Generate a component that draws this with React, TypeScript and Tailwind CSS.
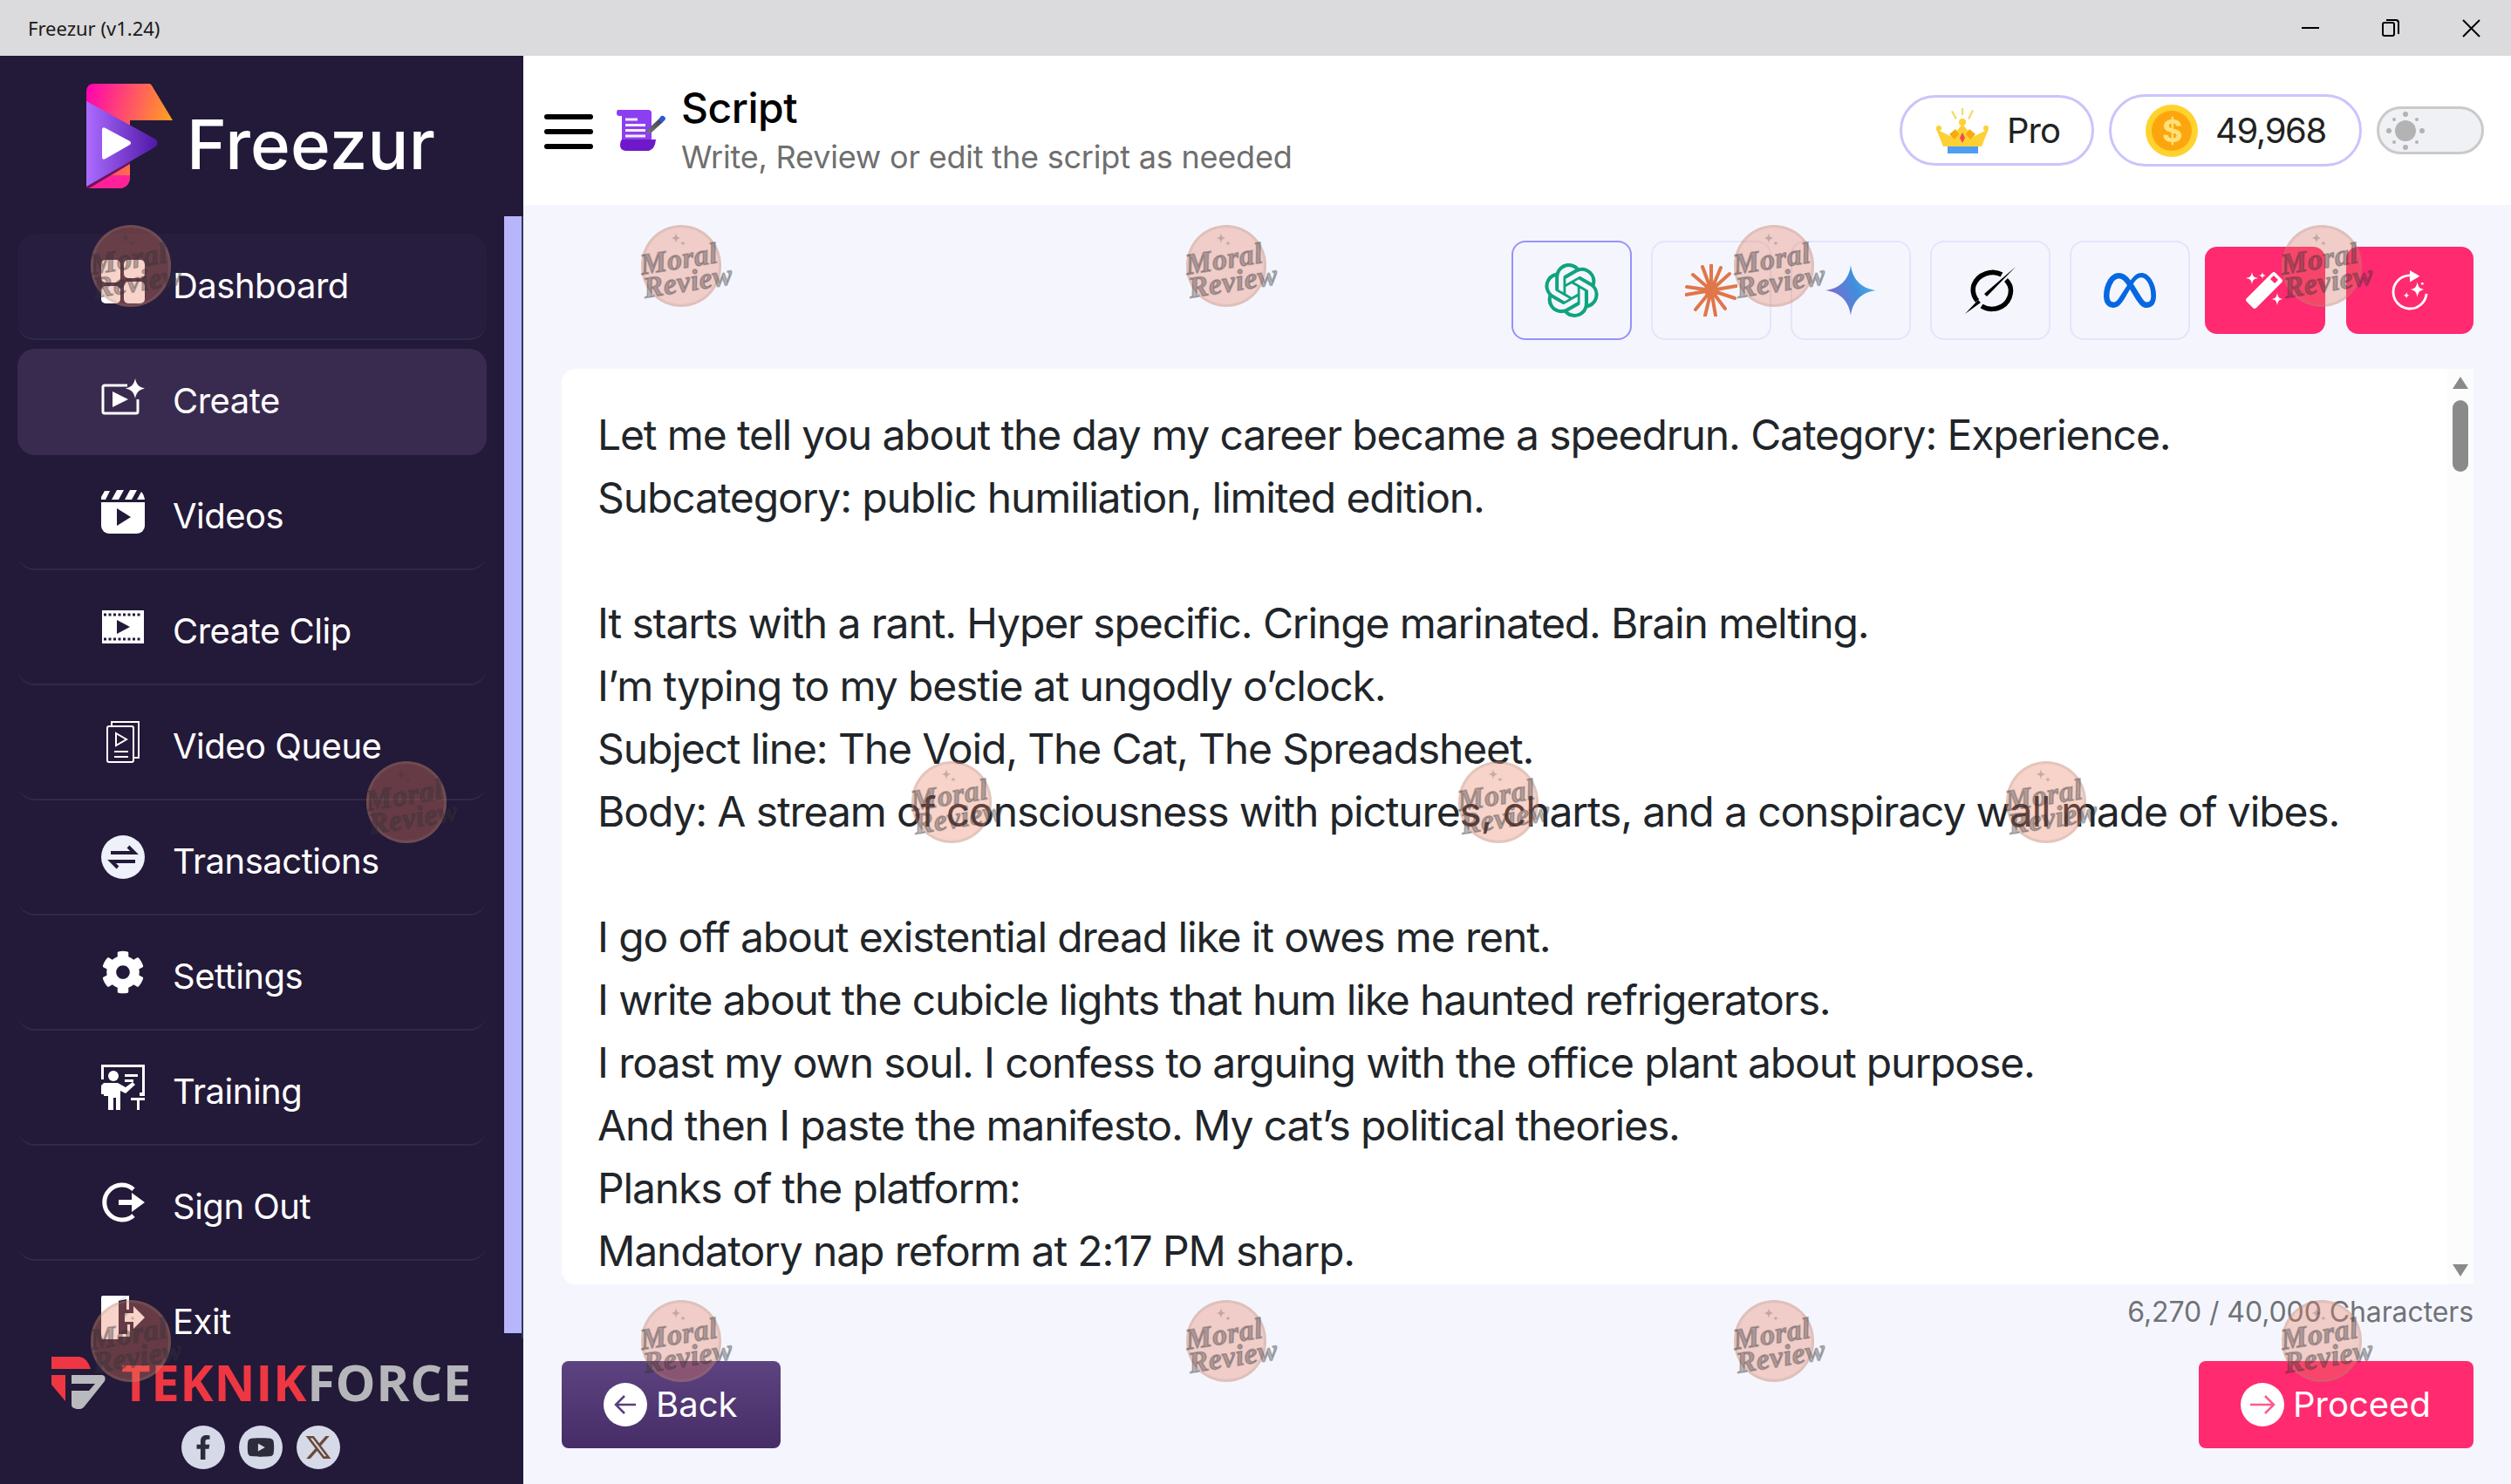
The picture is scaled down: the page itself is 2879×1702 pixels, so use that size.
import { FaCog, FaFacebookF, FaYoutube } from "react-icons/fa";
import { FaXTwitter } from "react-icons/fa6";
import { SiMeta, SiOpenai } from "react-icons/si";

const DashboardIcon = () => (
  <svg viewBox="0 0 50 50" className="w-[50px] h-[50px]" fill="#fff">
    <rect x="0" y="0" width="22" height="26" rx="5" />
    <rect x="26" y="0" width="24" height="21" rx="5" />
    <rect x="0" y="30" width="22" height="20" rx="5" />
    <rect x="26" y="25" width="24" height="25" rx="5" />
  </svg>
);

const CreateIcon = () => (
  <svg viewBox="0 0 50 42" className="w-[50px] h-[42px]" fill="none">
    <path d="M30 8H4a2 2 0 0 0-2 2v28a2 2 0 0 0 2 2h36a2 2 0 0 0 2-2V24" stroke="#fff" strokeWidth="3" />
    <path d="M13 15l18 9-18 9z" fill="#fff" />
    <path d="M39 0c1.500 7 4 10 11 11.500-7 1.500-9.500 4.500-11 11.500-1.500-7-4-10-11-11.500 7-1.500 9.500-4.500 11-11.500z" fill="#fff" />
  </svg>
);

const VideosIcon = () => (
  <svg viewBox="0 0 50 50" className="w-[50px] h-[50px]">
    <path d="M0 14h50v27a9 9 0 0 1-9 9H9a9 9 0 0 1-9-9z" fill="#fff" />
    <path d="M0 11V8l4-7h6L5 11zM12 11l6-11h8l-6 11zM27 11l6-11h8l-6 11zM41 11l5-9q3 3 4 9z" fill="#fff" />
    <path d="M18 21l16 10-16 10z" fill="#231938" />
  </svg>
);

const ClipIcon = () => (
  <svg viewBox="0 0 48 38" className="w-[48px] h-[38px]">
    <rect width="48" height="38" fill="#fff" />
    <path d="M2 5h44M2 33h44" stroke="#231938" strokeWidth="3" strokeDasharray="3 2.500" />
    <path d="M17 11l15 8-15 8z" fill="#231938" />
  </svg>
);

const QueueIcon = () => (
  <svg viewBox="0 0 38 48" className="w-[38px] h-[48px]" fill="none" stroke="#fff" strokeWidth="2">
    <rect x="1" y="6" width="30" height="41" rx="2" />
    <path d="M6 6V1h31v41h-6" />
    <path d="M11 14l12 7-12 7z" />
    <path d="M9 35h16M9 41h16" />
  </svg>
);

const TransactionsIcon = () => (
  <svg viewBox="0 0 50 50" className="w-[50px] h-[50px]">
    <circle cx="25" cy="25" r="25" fill="#eef0fa" />
    <path d="M11 20h27l-7-7M39 30H12l7 7" fill="none" stroke="#231938" strokeWidth="4" />
  </svg>
);

const TrainingIcon = () => (
  <svg viewBox="0 0 50 52" className="w-[50px] h-[52px]" fill="#fff">
    <path d="M0 0h50v36H44v-4h3V3H3v14H0z" />
    <circle cx="14" cy="13" r="6" />
    <path d="M3 21h16l9 5 8-6 3 3-11 10-6-3v22h-5V38h-3v14H8V36H3v-2H0V24z" />
    <path d="M27 11h15v3H27zM27 17h10v3H27z" />
    <path d="M34 38h16v3h-6v11h-3V41h-7z" />
  </svg>
);

const SignOutIcon = () => (
  <svg viewBox="0 0 50 46" className="w-[50px] h-[46px]" fill="none">
    <path d="M37 8A20 20 0 1 0 37 38" stroke="#fff" strokeWidth="5" />
    <path d="M20 20h15v-8l15 11-15 11v-8H20z" fill="#fff" />
  </svg>
);

const ExitIcon = () => (
  <svg viewBox="0 0 50 50" className="w-[50px] h-[50px]">
    <path d="M0 2q0-2 2-2h28l-10 6v44H2q-2 0-2-2z" fill="#fff" />
    <path d="M20 6L30 0h2v16h-3V4zM30 33h3v14H20v-3h10z" fill="#fff" />
    <path d="M27 20h10v-8l13 13-13 13v-8H27z" fill="#fff" />
  </svg>
);

const LogoMark = () => (
  <svg viewBox="0 0 99 120" className="w-[99px] h-[120px] shrink-0">
    <defs>
      <linearGradient id="logoTop" x1="0" y1="0" x2="1" y2="0.3">
        <stop offset="0" stopColor="#ff00b4" />
        <stop offset="1" stopColor="#ffa11f" />
      </linearGradient>
      <linearGradient id="logoTri" x1="0" y1="0" x2="1" y2="0">
        <stop offset="0" stopColor="#ab6cff" />
        <stop offset="1" stopColor="#4f17a6" />
      </linearGradient>
    </defs>
    <path d="M9 0H72q2 0 3 2L99 42H50V106q0 14-14 14H0V9q0-9 9-9z" fill="url(#logoTop)" />
    <path d="M20 105H50v1q0 14-14 14H0z" fill="#ff2199" />
    <path d="M0 117L50 84V92L3 120H0z" fill="#6b1457" />
    <path d="M0 20L80 64q3 4 0 8L0 118z" fill="url(#logoTri)" />
    <path d="M18 53q0-4 4-2L50 66q2 2 0 4L22 86q-4 2-4-2z" fill="#fff" />
  </svg>
);

const TeknikMark = () => (
  <svg viewBox="10 11 62 60" className="w-[62px] h-[60px] shrink-0">
    <path d="M10 11H42q9 1 13 14H10z" fill="#ee3742" />
    <path d="M10 32H26V62L10 43z" fill="#ee3742" />
    <path d="M33 32H68q5 1 3 7L47 69q-5 4-11 1-3-1-3-4V50H53L60 42H33z" fill="#b9babd" />
  </svg>
);

const ScriptIcon = () => (
  <svg viewBox="10 12 60 50" className="w-[60px] h-[50px]">
    <defs>
      <linearGradient id="pen" x1="0" y1="1" x2="1" y2="0">
        <stop offset="0" stopColor="#77777f" />
        <stop offset="1" stopColor="#3c3c48" />
      </linearGradient>
    </defs>
    <path d="M14 13H49q4 0 4 4V48H19V20H16q-3 0-3-3t1-4z" fill="#8c3ff0" />
    <path d="M19 47H58q-1 11-8 13H23q-6-1-6-6t2-7z" fill="#6f18ca" />
    <path d="M23 22.500h14v3H23zM23 29h23v3H23zM23 35h23v3H23zM23 41.500h23v3H23z" fill="#f2eefa" />
    <path d="M49 35L62 23l4 4L53 39l-5 2z" fill="url(#pen)" />
    <path d="M61 24l3-4q2-1 4 1t0 4l-3 3z" fill="#2b58d8" />
  </svg>
);

const CrownIcon = () => (
  <svg viewBox="0 0 60 52" className="w-[60px] h-[52px]">
    <path d="M29 0h2v8h-2zM17 4l2-1 5 9-2 1zM43 3l-5 10-2-1 5-10z" fill="#f4d964" />
    <path d="M8 44L0 24 18 33 30 18 42 33 60 24 52 44z" fill="#fdd133" />
    <path d="M15 30l7-6 4 6-5 6zM45 30l-7-6-4 6 5 6z" fill="#f7a90d" />
    <circle cx="30" cy="16" r="4" fill="#fdd133" />
    <circle cx="3" cy="23" r="3" fill="#fdd133" />
    <circle cx="57" cy="23" r="3" fill="#fdd133" />
    <path d="M30 28l3 6-3 6-3-6z" fill="#f3455a" />
    <rect x="13" y="44" width="35" height="8" fill="#4d9df5" />
  </svg>
);

const CoinIcon = () => (
  <div className="w-[60px] h-[60px] rounded-full bg-[#ffd22e] flex items-center justify-center shrink-0">
    <div className="w-[46px] h-[46px] rounded-full bg-[#fda50f] flex items-center justify-center text-[#ffe17a] text-[36px] font-bold leading-none">
      $
    </div>
  </div>
);

const SunIcon = () => (
  <svg viewBox="0 0 44 44" className="w-[44px] h-[44px]" fill="#b3b3b3">
    <circle cx="22" cy="22" r="12" />
    <circle cx="22" cy="3" r="3" />
    <circle cx="22" cy="41" r="3" />
    <circle cx="3" cy="22" r="3" />
    <circle cx="41" cy="22" r="3" />
    <circle cx="9" cy="9" r="2" />
    <circle cx="35" cy="9" r="2" />
    <circle cx="9" cy="35" r="2" />
    <circle cx="35" cy="35" r="2" />
  </svg>
);

const ClaudeIcon = () => (
  <svg viewBox="-30 -30 60 60" className="w-[60px] h-[60px]" stroke="#e0764a" strokeWidth="4" strokeLinecap="round">
    <path d="M0 0V-29M0 0L11 -26M0 0L21 -19M0 0L29 -5M0 0L27 9M0 0L16 21M0 0L5 29M0 0L-7 29M0 0L-18 22M0 0L-29 5M0 0L-28 -4M0 0L-21 -18M0 0L-10 -27" />
    <circle r="8" fill="#e0764a" stroke="none" />
  </svg>
);

const GeminiIcon = () => (
  <svg viewBox="0 0 60 60" className="w-[58px] h-[60px]">
    <defs>
      <linearGradient id="gemini" x1="0" y1="0.7" x2="1" y2="0.3">
        <stop offset="0" stopColor="#8d63cf" />
        <stop offset="0.6" stopColor="#3f8fdc" />
        <stop offset="1" stopColor="#5bb3e8" />
      </linearGradient>
    </defs>
    <path d="M30 0C32 17 43 28 60 30 43 32 32 43 30 60 28 43 17 32 0 30 17 28 28 17 30 0z" fill="url(#gemini)" />
  </svg>
);

const GrokIcon = () => (
  <svg viewBox="53 12 59 56" className="w-[59px] h-[56px]">
    <path d="M95 22C84 16 68 21 63 34c-2 7 0 13 4 18M72 58c11 7 27 3 32-10 3-8 1-15-4-20" fill="none" stroke="#000" strokeWidth="5.500" />
    <path d="M111 13L78 47 75 44zM53 67L68 51 71 54z" fill="#000" />
  </svg>
);

const WandIcon = () => (
  <svg viewBox="16 10 44 44" className="w-[44px] h-[44px]" fill="#fff">
    <path d="M46 12q2-2 4 0l7 7q2 2 0 4L28 52q-2 2-4 0l-7-7q-2-2 0-4z" />
    <path d="M44 19l4-4 5 5-4 4z" fill="#ff2a70" />
    <path d="M23 11c1 5 2 6 7 7-5 1-6 2-7 7-1-5-2-6-7-7 5-1 6-2 7-7zM35 11c.6 3 1 3.500 4 4-3 .5-3.400 1-4 4-.6-3-1-3.500-4-4 3-.5 3.400-1 4-4zM52 35c1 5 2 6 6 7-4 1-5 2-6 7-1-5-2-6-6-7 4-1 5-2 6-7z" />
  </svg>
);

const RefreshSparkIcon = () => (
  <svg viewBox="181 9 44 48" className="w-[42px] h-[46px]">
    <path d="M203 15A20 20 0 1 0 223 37" fill="none" stroke="#fff" strokeWidth="3" />
    <path d="M203 9l12 7-12 7z" fill="#fff" />
    <path d="M212 23c1.200 6 2.500 7.500 8 9-5.500 1.500-6.800 3-8 9-1.200-6-2.500-7.500-8-9 5.500-1.500 6.800-3 8-9zM199 35c.7 3 1.300 3.500 4 4-2.700.5-3.300 1-4 4-.7-3-1.300-3.500-4-4 2.700-.5 3.300-1 4-4z" fill="#fff" />
    <circle cx="218" cy="25" r="1.500" fill="#fff" />
  </svg>
);

const navItems = [
  { label: "Dashboard", icon: <DashboardIcon />, rowClass: "bg-[#271d3e]" },
  { label: "Create", icon: <CreateIcon />, rowClass: "bg-[#392b4f] border-b-transparent" },
  { label: "Videos", icon: <VideosIcon />, rowClass: "" },
  { label: "Create Clip", icon: <ClipIcon />, rowClass: "" },
  { label: "Video Queue", icon: <QueueIcon />, rowClass: "" },
  { label: "Transactions", icon: <TransactionsIcon />, rowClass: "" },
  { label: "Settings", icon: <FaCog className="w-[50px] h-[50px] text-white" />, rowClass: "" },
  { label: "Training", icon: <TrainingIcon />, rowClass: "" },
  { label: "Sign Out", icon: <SignOutIcon />, rowClass: "" },
  { label: "Exit", icon: <ExitIcon />, rowClass: "border-b-transparent" },
];

const aiButtons = [
  { key: "gpt", icon: <SiOpenai className="w-[62px] h-[62px] text-[#10a37f]" />, active: true },
  { key: "claude", icon: <ClaudeIcon />, active: false },
  { key: "gemini", icon: <GeminiIcon />, active: false },
  { key: "grok", icon: <GrokIcon />, active: false },
  { key: "meta", icon: <SiMeta className="w-[60px] h-[60px] text-[#0668e1]" />, active: false },
];

const scriptText = `Let me tell you about the day my career became a speedrun. Category: Experience.
Subcategory: public humiliation, limited edition.

It starts with a rant. Hyper specific. Cringe marinated. Brain melting.
I’m typing to my bestie at ungodly o’clock.
Subject line: The Void, The Cat, The Spreadsheet.
Body: A stream of consciousness with pictures, charts, and a conspiracy wall made of vibes.

I go off about existential dread like it owes me rent.
I write about the cubicle lights that hum like haunted refrigerators.
I roast my own soul. I confess to arguing with the office plant about purpose.
And then I paste the manifesto. My cat’s political theories.
Planks of the platform:
Mandatory nap reform at 2:17 PM sharp.`;

// watermark stamps sit on top of the whole window
const stamps = [
  "left-[104px] top-[258px]",
  "left-[735px] top-[258px]",
  "left-[1360px] top-[258px]",
  "left-[1988px] top-[258px]",
  "left-[2616px] top-[258px]",
  "left-[420px] top-[873px]",
  "left-[1045px] top-[873px]",
  "left-[1672px] top-[873px]",
  "left-[2300px] top-[873px]",
  "left-[104px] top-[1491px]",
  "left-[735px] top-[1491px]",
  "left-[1360px] top-[1491px]",
  "left-[1988px] top-[1491px]",
  "left-[2616px] top-[1491px]",
];

const Stamp = ({ place }: { place: string }) => (
  <div className={`absolute ${place} w-[92px] h-[94px] rounded-full bg-[rgba(232,125,97,0.34)] border-[3px] border-[rgba(150,140,130,0.2)] flex flex-col items-center justify-end pb-[12px] pointer-events-none`}>
    <svg viewBox="0 0 20 20" className="absolute left-[30px] top-[6px] w-5 h-5" fill="rgba(50,50,55,0.25)">
      <path d="M7 0c.6 4 1.400 5 5 6-3.600 1-4.400 2-5 6-.6-4-1.400-5-5-6 3.600-1 4.400-2 5-6zM15 9c.3 2 .7 2.500 3 3-2.300.5-2.700 1-3 3-.3-2-.7-2.500-3-3 2.300-.5 2.700-1 3-3z" />
    </svg>
    <div className="-rotate-[9deg] flex flex-col items-center text-[rgba(50,50,55,0.36)] font-['Liberation_Serif',serif] italic font-bold text-[34px] leading-[27px] tracking-[0.5px] whitespace-nowrap [-webkit-text-stroke:1.5px_rgba(50,50,55,0.3)]">
      <span>Moral</span>
      <span className="ml-3">Review</span>
    </div>
  </div>
);

const App = () => {
  return (
    <div className="relative w-screen h-screen overflow-hidden flex flex-col bg-[#f5f6fd] font-['Inter',sans-serif]">
      {/* window title bar */}
      <div className="h-[64px] shrink-0 bg-[#dbdadc] flex items-center pl-8">
        <span className="font-['Noto_Sans',sans-serif] text-[22px] text-[#1a1a1a]">Freezur (v1.24)</span>
        <div className="ml-auto flex items-center pr-[35px] gap-[72px]">
          <div className="w-5 h-[2px] bg-black" />
          <div className="relative w-5 h-5">
            <div className="absolute left-0 bottom-0 w-[15px] h-[17px] border-2 border-black rounded-[3px]" />
            <div className="absolute right-0 top-0 w-[15px] h-[17px] border-t-2 border-r-2 border-black rounded-tr-[4px]" />
          </div>
          <svg viewBox="0 0 21 21" className="w-[21px] h-[21px]" stroke="#000" strokeWidth="2">
            <path d="M1 1l19 19M20 1L1 20" />
          </svg>
        </div>
      </div>

      <div className="flex-1 flex min-h-0">
        {/* sidebar */}
        <aside className="w-[600px] shrink-0 bg-[#231938] flex flex-col">
          <div className="h-[184px] shrink-0 flex pl-[99px] pt-8 gap-4">
            <LogoMark />
            <span className="text-white font-medium text-[78px] leading-none mt-[31px] tracking-[0.2px]">Freezur</span>
          </div>
          <div className="h-[1287px] shrink-0 flex">
            <nav className="w-[578px] shrink-0 pl-5 pr-5 pt-5 flex flex-col gap-[10px]">
              {navItems.map((item) => (
                <div
                  key={item.label}
                  className={`h-[122px] shrink-0 rounded-[20px] border-b-2 border-[#31284a] pl-[96px] flex items-center gap-[32px] text-white text-[40px] tracking-[-0.5px] ${item.rowClass}`}
                >
                  <div className="w-[50px] h-[50px] -mt-[10px] flex items-center justify-center shrink-0">{item.icon}</div>
                  <span>{item.label}</span>
                </div>
              ))}
            </nav>
            <div className="w-5 shrink-0 flex flex-col">
              <div className="h-[1281px] bg-[#b8b5fb]" />
              <div className="h-[6px] bg-[#1e1b40]" />
            </div>
            <div className="w-[2px] bg-[#2f3a5e]" />
          </div>
          <div className="relative flex-1 flex flex-col items-center pt-[21px]">
            <div className="flex items-start">
              <TeknikMark />
              <div className="ml-[18px] mt-[-4px] font-['Open_Sans',sans-serif] font-bold text-[58px] leading-[66px] tracking-[0.6px] whitespace-nowrap">
                <span className="text-[#ee3742]">TEKNIK</span>
                <span className="text-[#b5b6b9]">FORCE</span>
              </div>
            </div>
            <div className="flex gap-4 mt-[17px] -ml-[2px]">
              <div className="w-[50px] h-[50px] rounded-full bg-[#d5d9e8] flex items-center justify-center">
                <FaFacebookF className="w-7 h-7 text-[#2c2c3a]" />
              </div>
              <div className="w-[50px] h-[50px] rounded-full bg-[#d5d9e8] flex items-center justify-center">
                <FaYoutube className="w-8 h-8 text-[#2c2c3a]" />
              </div>
              <div className="w-[50px] h-[50px] rounded-full bg-[#d5d9e8] flex items-center justify-center">
                <FaXTwitter className="w-8 h-8 text-[#6b4a3a]" />
              </div>
            </div>
          </div>
        </aside>

        {/* main column */}
        <main className="flex-1 min-w-0 flex flex-col">
          <header className="h-[171px] shrink-0 bg-white flex items-center pl-6 pr-[31px]">
            <div className="w-14 flex flex-col gap-[11px] shrink-0 mt-[2px]">
              <div className="h-[6px] rounded-full bg-black" />
              <div className="h-[6px] rounded-full bg-black" />
              <div className="h-[6px] rounded-full bg-black" />
            </div>
            <div className="ml-6 mt-[1px]">
              <ScriptIcon />
            </div>
            <div className="ml-[17px] flex flex-col">
              <span className="text-[48px] leading-[60px] font-medium text-black tracking-[-0.5px]">Script</span>
              <span className="text-[36px] leading-[52px] text-[#6f6f6f] tracking-[-0.2px]">Write, Review or edit the script as needed</span>
            </div>
            <div className="ml-auto flex items-center">
              <div className="w-[223px] h-[81px] rounded-full border-[3px] border-[#c9c5fb] flex items-center pl-[39px] gap-[21px] text-[40px] text-[#222] tracking-[-1px]">
                <CrownIcon />
                <span>Pro</span>
              </div>
              <div className="ml-[17px] w-[290px] h-[83px] rounded-full border-[3px] border-[#c9c5fb] flex items-center pl-[39px] gap-[20px] text-[40px] text-[#222] tracking-[-1.4px]">
                <CoinIcon />
                <span>49,968</span>
              </div>
              <div className="ml-[17px] w-[123px] h-[55px] rounded-full border-[3px] border-[#cacaca] bg-[#f0f1f5] flex items-center pl-2">
                <SunIcon />
              </div>
            </div>
          </header>

          <div className="flex-1 min-h-0 flex flex-col pl-11 pr-[43px]">
            {/* model picker */}
            <div className="h-[188px] shrink-0 flex justify-end items-start pt-[41px]">
              <div className="flex gap-[22px]">
                {aiButtons.map((b) => (
                  <div
                    key={b.key}
                    className={`w-[138px] h-[114px] rounded-[16px] border-2 flex items-center justify-center ${b.active ? "border-[#9791fb]" : "border-[#e5e3fb]"}`}
                  >
                    {b.icon}
                  </div>
                ))}
              </div>
              <div className="ml-[17px] mt-[7px] w-[138px] h-[100px] rounded-[14px] bg-[#ff2a70] flex items-center justify-center">
                <WandIcon />
              </div>
              <div className="ml-6 mt-[7px] w-[146px] h-[100px] rounded-[14px] bg-[#ff2a70] flex items-center justify-center">
                <RefreshSparkIcon />
              </div>
            </div>

            {/* script editor */}
            <div className="h-[1050px] shrink-0 bg-white rounded-[16px] flex">
              <div className="flex-1 min-w-0 pl-[41px] pt-10 text-[#212529] text-[48px] leading-[72px] tracking-[-1.13px] whitespace-pre-line">
                {scriptText}
              </div>
              <div className="w-[30px] shrink-0 bg-[#fcfcfc] flex flex-col items-center pt-[9px] pb-[9px]">
                <div className="w-0 h-0 border-x-[9px] border-x-transparent border-b-[14px] border-b-[#8a8a8a]" />
                <div className="w-[18px] h-[82px] rounded-full bg-[#8a8a8a] mt-[13px]" />
                <div className="mt-auto w-0 h-0 border-x-[9px] border-x-transparent border-t-[14px] border-t-[#8a8a8a]" />
              </div>
            </div>

            <div className="h-[64px] shrink-0 flex items-center justify-end text-[32px] tracking-[-0.1px] text-[#6f7377]">
              6,270 / 40,000 Characters
            </div>

            <div className="flex justify-between mt-[24px]">
              <div className="w-[251px] h-[100px] rounded-[8px] bg-gradient-to-b from-[#5d4480] to-[#462d68] flex items-center pl-12 gap-[10px] text-white text-[40px]">
                <div className="w-[50px] h-[50px] rounded-full bg-white flex items-center justify-center">
                  <svg viewBox="0 0 28 28" className="w-7 h-7" fill="none" stroke="#57407b" strokeWidth="2.500">
                    <path d="M26 14H3M13 4L3 14l10 10" />
                  </svg>
                </div>
                <span>Back</span>
              </div>
              <div className="w-[315px] h-[100px] rounded-[8px] bg-[#ff2a70] flex items-center pl-12 gap-[10px] text-white text-[40px]">
                <div className="w-[50px] h-[50px] rounded-full bg-white flex items-center justify-center">
                  <svg viewBox="0 0 32 28" className="w-8 h-7" fill="none" stroke="#ff5b8c" strokeWidth="2.500">
                    <path d="M2 14h27M19 4l10 10-10 10" />
                  </svg>
                </div>
                <span>Proceed</span>
              </div>
            </div>
          </div>
        </main>
      </div>

      {stamps.map((place) => (
        <Stamp key={place} place={place} />
      ))}
    </div>
  );
};

export default App;
